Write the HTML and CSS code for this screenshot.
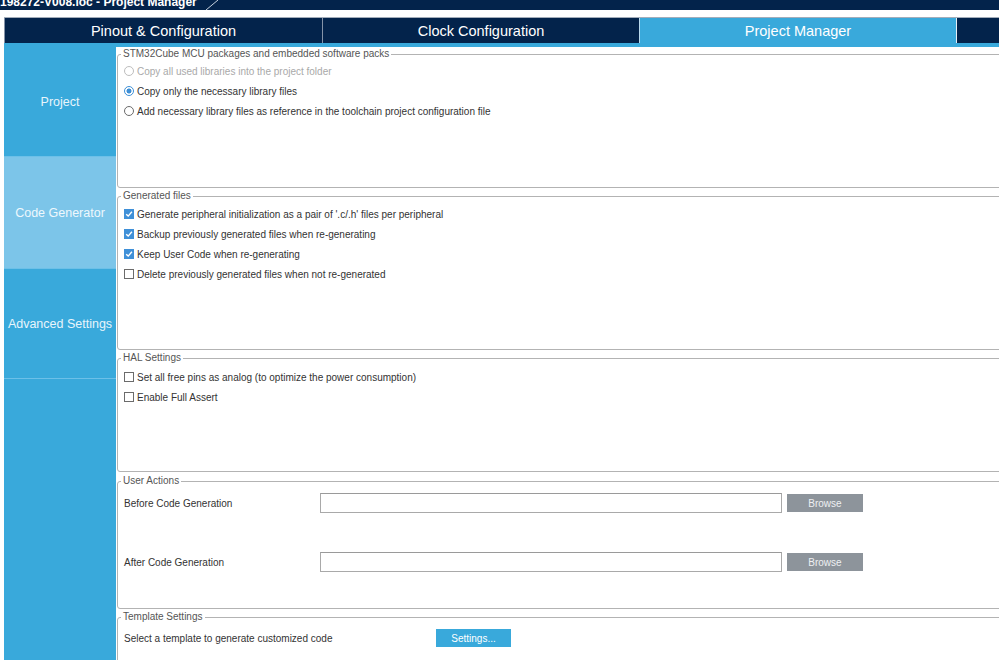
FILE: index.html
```html
<!DOCTYPE html>
<html lang="en">
<head>
  <meta charset="UTF-8">
  <meta name="viewport" content="width=device-width, initial-scale=1.0">
  <title>198272-V008.ioc - Project Manager</title>
  <link rel="stylesheet" href="styles.css">
</head>
<body>
  <div class="titlebar">
    <span class="title">198272-V008.ioc - Project Manager</span>
    <svg class="crumb" width="14" height="10" viewBox="0 0 14 10">
      <line x1="1" y1="10" x2="13" y2="0" stroke="#c9d3df" stroke-width="1"/>
    </svg>
  </div>

  <nav class="tabs">
    <div class="tab tab-first">Pinout &amp; Configuration</div>
    <div class="tab">Clock Configuration</div>
    <div class="tab active">Project Manager</div>
    <div class="tab tab-more"></div>
  </nav>

  <div class="main">
    <aside class="sidebar">
      <div class="side-item">Project</div>
      <div class="side-item selected">Code Generator</div>
      <div class="side-item">Advanced Settings</div>
    </aside>

    <section class="content">
      <fieldset class="group group-first">
        <legend>STM32Cube MCU packages and embedded software packs</legend>
        <div class="group-body packs">
          <div class="option disabled"><span class="radio"></span>Copy all used libraries into the project folder</div>
          <div class="option"><span class="radio checked"></span>Copy only the necessary library files</div>
          <div class="option"><span class="radio"></span>Add necessary library files as reference in the toolchain project configuration file</div>
        </div>
      </fieldset>

      <fieldset class="group">
        <legend>Generated files</legend>
        <div class="group-body generated">
          <div class="option"><span class="check on"><svg width="8" height="8" viewBox="0 0 8 8"><path d="M1.2 4.2 L3.2 6.1 L6.9 1.8" fill="none" stroke="#fff" stroke-width="1.4"/></svg></span>Generate peripheral initialization as a pair of '.c/.h' files per peripheral</div>
          <div class="option"><span class="check on"><svg width="8" height="8" viewBox="0 0 8 8"><path d="M1.2 4.2 L3.2 6.1 L6.9 1.8" fill="none" stroke="#fff" stroke-width="1.4"/></svg></span>Backup previously generated files when re-generating</div>
          <div class="option"><span class="check on"><svg width="8" height="8" viewBox="0 0 8 8"><path d="M1.2 4.2 L3.2 6.1 L6.9 1.8" fill="none" stroke="#fff" stroke-width="1.4"/></svg></span>Keep User Code when re-generating</div>
          <div class="option"><span class="check"></span>Delete previously generated files when not re-generated</div>
        </div>
      </fieldset>

      <fieldset class="group">
        <legend>HAL Settings</legend>
        <div class="group-body hal">
          <div class="option"><span class="check"></span>Set all free pins as analog (to optimize the power consumption)</div>
          <div class="option"><span class="check"></span>Enable Full Assert</div>
        </div>
      </fieldset>

      <fieldset class="group group-actions">
        <legend>User Actions</legend>
        <div class="group-body actions">
          <span class="field-label">Before Code Generation</span>
          <input class="path-input" type="text">
          <button class="browse">Browse</button>
          <span class="field-label">After Code Generation</span>
          <input class="path-input" type="text">
          <button class="browse">Browse</button>
        </div>
      </fieldset>

      <fieldset class="group">
        <legend>Template Settings</legend>
        <div class="group-body template">
          <span class="field-label template-label">Select a template to generate customized code</span>
          <button class="settings-btn">Settings...</button>
        </div>
      </fieldset>
    </section>
  </div>
</body>
</html>
```

FILE: styles.css
```css
body {
  margin: 0;
  font-family: "Liberation Sans", Arial, sans-serif;
  background: #fff;
  overflow: hidden;
  height: 664px;
}
.titlebar {
  height: 10px;
  background: #03234b;
  display: flex;
  align-items: flex-start;
  overflow: hidden;
}
.title {
  color: #fff;
  font-weight: bold;
  font-size: 12px;
  line-height: 12px;
  margin-top: -4px;
  white-space: nowrap;
}
.crumb {
  margin-left: 8px;
  flex-shrink: 0;
}
.tabs {
  display: flex;
  height: 26px;
  margin: 7px 0 0 4px;
  border-top: 1px solid #a3adba;
  box-sizing: border-box;
}
.tab {
  box-sizing: border-box;
  width: 317px;
  flex-shrink: 0;
  background: #03234b;
  color: #fff;
  font-size: 14.5px;
  line-height: 26px;
  text-align: center;
  border-left: 1px solid #8593a8;
}
.tab-first {
  width: 318px;
}
.tab.active {
  background: #39a9db;
  border-left-color: #b9d9ec;
}
.tab-more {
  flex: 1;
  width: auto;
  border-left: 1px solid #e6eef5;
}
.main {
  display: flex;
  margin-left: 4px;
  border-top: 4px solid #39a9db;
  height: 617px;
  box-sizing: border-box;
}
.sidebar {
  width: 112px;
  flex-shrink: 0;
  background: #39a9db;
}
.side-item {
  height: 110px;
  padding-top: 1px;
  box-sizing: border-box;
  border-bottom: 1px solid #6cc0e8;
  display: flex;
  align-items: center;
  justify-content: center;
  color: #e8f5fc;
  font-size: 12.5px;
  white-space: nowrap;
}
.side-item.selected {
  height: 112px;
  background: #7cc5e9;
  color: #eef8fd;
}
.content {
  flex: 1;
  min-width: 0;
  padding-left: 1px;
  overflow: hidden;
}
.group {
  margin: 2px -30px 0 0;
  padding: 0 6px;
  border: 1px solid #b3b3b3;
  border-radius: 3px;
}
.group-first {
  margin-top: 1px;
}
.group-actions {
  margin-top: 3px;
}
.group legend {
  font-size: 10px;
  line-height: 12px;
  color: #555;
  padding: 0 2px;
  margin-left: -3px;
}
.group-body {
  box-sizing: border-box;
  font-size: 10px;
  color: #333;
}
.packs {
  height: 127px;
  padding-top: 1px;
}
.generated {
  height: 147px;
  padding-top: 2px;
}
.hal {
  height: 107px;
  padding-top: 3px;
}
.option {
  display: flex;
  align-items: center;
  height: 20px;
  white-space: nowrap;
}
.option.disabled {
  color: #a9a9a9;
}
.radio {
  box-sizing: border-box;
  width: 10px;
  height: 10px;
  border-radius: 50%;
  border: 1px solid #6b6b6b;
  background: #fff;
  margin-right: 3px;
  flex-shrink: 0;
}
.radio.checked {
  border-color: #3d8fd6;
  background: radial-gradient(circle, #3d8fd6 0 2.2px, #fff 2.8px);
}
.disabled .radio {
  border-color: #bdbdbd;
}
.check {
  box-sizing: border-box;
  width: 10px;
  height: 10px;
  border: 1px solid #6b6b6b;
  background: #fff;
  margin-right: 3px;
  flex-shrink: 0;
  display: flex;
  align-items: center;
  justify-content: center;
}
.check.on {
  background: #3f90d8;
  border-color: #3f90d8;
}
.actions {
  height: 121px;
  padding-top: 6px;
  display: grid;
  grid-template-columns: 192px 462px 76px;
  grid-auto-rows: 20px;
  column-gap: 4px;
  row-gap: 39px;
  align-items: center;
}
.field-label {
  white-space: nowrap;
  color: #333;
}
.path-input {
  box-sizing: border-box;
  height: 20px;
  width: 462px;
  margin: 0;
  border: 1px solid #a9a9a9;
  border-top-color: #9a9a9a;
  background: #fff;
}
.browse {
  height: 18px;
  width: 76px;
  margin-left: 1px;
  border: none;
  background: #8d949b;
  color: #eef0f2;
  font-family: inherit;
  font-size: 10px;
  padding: 0;
}
.template {
  height: 60px;
  padding-top: 6px;
  display: flex;
  align-items: flex-start;
}
.template-label {
  width: 312px;
  line-height: 19px;
}
.settings-btn {
  height: 18px;
  width: 75px;
  border: none;
  background: #39a9db;
  color: #fff;
  font-family: inherit;
  font-size: 10px;
  padding: 0;
}
```
